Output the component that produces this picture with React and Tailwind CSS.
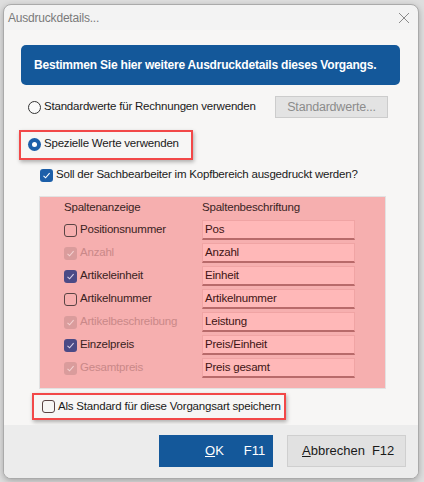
import React from "react";

function Check({ color = "#fff" }) {
  return (
    <svg width="9" height="9" viewBox="0 0 9 9" fill="none">
      <path d="M1.5 4.8 L3.6 6.8 L7.6 2.2" stroke={color} strokeWidth="1.1" />
    </svg>
  );
}

function Box({ state }) {
  // state: "off" | "on" | "disabled" | "blue"
  if (state === "off")
    return <span className="w-[13px] h-[13px] rounded-[3px] border border-[#5a4444] shrink-0" />;
  if (state === "blue")
    return (
      <span className="w-[13px] h-[13px] rounded-[3px] bg-[#1c5fa9] flex items-center justify-center shrink-0">
        <Check />
      </span>
    );
  if (state === "on")
    return (
      <span className="w-[13px] h-[13px] rounded-[3px] bg-[#4b4a86] flex items-center justify-center shrink-0">
        <Check color="#d8d0e8" />
      </span>
    );
  return (
    <span className="w-[13px] h-[13px] rounded-[3px] bg-[#da9c9c] flex items-center justify-center shrink-0">
      <Check color="#f4d0d0" />
    </span>
  );
}

const rows = [
  { label: "Positionsnummer", state: "off", value: "Pos" },
  { label: "Anzahl", state: "disabled", value: "Anzahl" },
  { label: "Artikeleinheit", state: "on", value: "Einheit" },
  { label: "Artikelnummer", state: "off", value: "Artikelnummer" },
  { label: "Artikelbeschreibung", state: "disabled", value: "Leistung" },
  { label: "Einzelpreis", state: "on", value: "Preis/Einheit" },
  { label: "Gesamtpreis", state: "disabled", value: "Preis gesamt" },
];

export default function App() {
  return (
    <div className="w-[424px] h-[482px] bg-[#dedede] pl-[3px] pt-[4px] font-['Liberation_Sans',sans-serif] text-[11.5px] tracking-[-0.2px] text-[#1a1a1a] whitespace-nowrap">
      <div className="w-[416px] h-[475px] rounded-[8px] border border-[#aaaaaa] bg-[#f3f3f3] flex flex-col overflow-hidden shadow-[0_2px_6px_rgba(0,0,0,0.25)]">
        {/* title bar */}
        <div className="h-[25px] flex items-center justify-between pl-[4px] pr-[8px] shrink-0">
          <span className="text-[#7a7a7a] text-[12px]">Ausdruckdetails...</span>
          <svg width="12" height="12" viewBox="0 0 12 12">
            <path d="M1 1 L11 11 M11 1 L1 11" stroke="#8a8a8a" strokeWidth="1" />
          </svg>
        </div>

        {/* content */}
        <div className="h-[395px] bg-[#f7f6f5] pl-[17px] pt-[15px] flex flex-col shrink-0">
          <div className="h-[40px] w-[379px] rounded-[5px] bg-[#14589a] flex items-center px-[13px] text-white font-bold text-[12px]">
            Bestimmen Sie hier weitere Ausdruckdetails dieses Vorgangs.
          </div>

          <div className="mt-[11px] h-[22px] w-[379px] flex items-center justify-between pr-[12px]">
            <div className="flex items-center pl-[7px]">
              <span className="w-[13px] h-[13px] rounded-full border border-[#333] bg-[#fafafa]" />
              <span className="ml-[3px]">Standardwerte für Rechnungen verwenden</span>
            </div>
            <div className="w-[113px] h-[22px] bg-[#e3e3e3] border border-[#cccccc] flex items-center justify-center text-[#8c8c8c] text-[12.5px]">
              Standardwerte...
            </div>
          </div>

          <div className="mt-[12px] ml-[-2px] w-[174px] h-[30px] border-2 border-[#f24848] shadow-[1px_2px_4px_rgba(0,0,0,0.3)] flex items-center pl-[7px] pb-[2px]">
            <span className="w-[13px] h-[13px] rounded-full bg-[#1c5fa9] flex items-center justify-center">
              <span className="w-[5px] h-[5px] rounded-full bg-white" />
            </span>
            <span className="ml-[3px]">Spezielle Werte verwenden</span>
          </div>

          <div className="mt-[5px] h-[20px] flex items-center pl-[19px]">
            <Box state="blue" />
            <span className="ml-[3px]">Soll der Sachbearbeiter im Kopfbereich ausgedruckt werden?</span>
          </div>

          <div className="mt-[11px] ml-[18px] w-[347px] h-[193px] border border-[#e2e2e2] bg-[#f6afaf] pt-[3px] pl-[24px] text-[#3a2424]">
            <div className="h-[16px] flex items-center">
              <span className="w-[138px]">Spaltenanzeige</span>
              <span>Spaltenbeschriftung</span>
            </div>
            <div className="mt-[4px] flex flex-col gap-[3px]">
              {rows.map((r) => (
                <div key={r.label} className="h-[20px] flex items-center">
                  <div className="w-[138px] flex items-center">
                    <Box state={r.state} />
                    <span className={"ml-[3px] " + (r.state === "disabled" ? "text-[#c98888]" : "text-[#3a2222]")}>
                      {r.label}
                    </span>
                  </div>
                  <div className="w-[153px] h-[20px] bg-[#ffb8b8] border border-[#f0a4a4] border-b-2 border-b-[#b86a6a] flex items-center pl-[2px] text-[#3e1414]">
                    {r.value}
                  </div>
                </div>
              ))}
            </div>
          </div>

          <div className="mt-[4px] ml-[11px] w-[254px] h-[27px] border-2 border-[#f24848] shadow-[1px_2px_4px_rgba(0,0,0,0.3)] flex items-center pl-[8px]">
            <Box state="off" />
            <span className="ml-[3px]">Als Standard für diese Vorgangsart speichern</span>
          </div>
        </div>

        {/* footer */}
        <div className="flex-1 bg-[#ececec] flex justify-end items-start pt-[10px] pr-[12px] gap-[14px] text-[13px] tracking-normal">
          <div className="w-[114px] h-[32px] bg-[#14589a] text-white flex items-center pl-[46px]">
            <span><span className="underline">O</span>K</span>
            <span className="ml-[20px]">F11</span>
          </div>
          <div className="w-[119px] h-[32px] bg-[#e1e1e1] border border-[#cfcfcf] flex items-center pl-[14px]">
            <span><span className="underline">A</span>bbrechen</span>
            <span className="ml-[7px]">F12</span>
          </div>
        </div>
      </div>
    </div>
  );
}
